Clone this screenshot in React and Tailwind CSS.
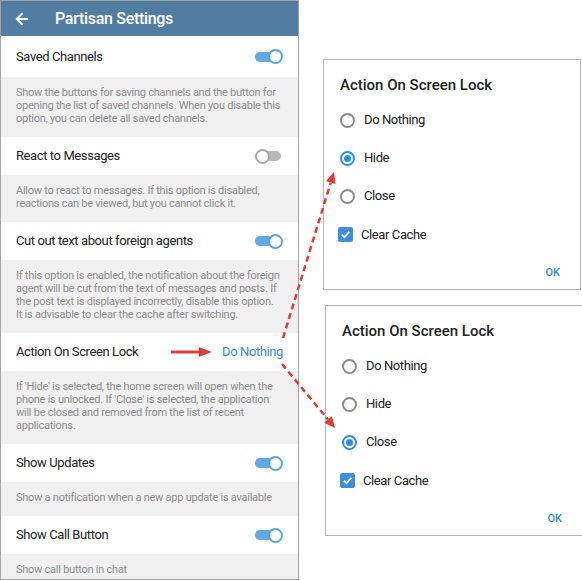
import { ArrowLeft } from 'lucide-react'

const ROWS = [
  {
    title: 'Saved Channels',
    toggle: true,
    first: true,
    desc: [
      'Show the buttons for saving channels and the button for',
      'opening the list of saved channels. When you disable this',
      'option, you can delete all saved channels.',
    ],
  },
  {
    title: 'React to Messages',
    toggle: false,
    desc: [
      'Allow to react to messages. If this option is disabled,',
      'reactions can be viewed, but you cannot click it.',
    ],
  },
  {
    title: 'Cut out text about foreign agents',
    toggle: true,
    desc: [
      'If this option is enabled, the notification about the foreign',
      'agent will be cut from the text of messages and posts. If',
      'the post text is displayed incorrectly, disable this option.',
      'It is advisable to clear the cache after switching.',
    ],
  },
  {
    title: 'Action On Screen Lock',
    value: 'Do Nothing',
    desc: [
      "If 'Hide' is selected, the home screen will open when the",
      "phone is unlocked. If 'Close' is selected, the application",
      'will be closed and removed from the list of recent',
      'applications.',
    ],
  },
  {
    title: 'Show Updates',
    toggle: true,
    desc: ['Show a notification when a new app update is available'],
  },
  {
    title: 'Show Call Button',
    toggle: true,
    desc: ['Show call button in chat'],
  },
]

function Toggle({ on }) {
  return (
    <div className="relative w-[28px] h-[15px]">
      {on ? (
        <>
          <div className="absolute left-0 right-[3px] top-[2.5px] h-[10px] rounded-full bg-[#63a9e6]" />
          <div className="absolute right-0 top-0 w-[15px] h-[15px] rounded-full bg-white border-2 border-[#5ba4e4]" />
        </>
      ) : (
        <>
          <div className="absolute left-[3px] right-[2px] top-[2.5px] h-[10px] rounded-full bg-[#b9b9b9]" />
          <div className="absolute left-0 top-0 w-[15px] h-[15px] rounded-full bg-white border-2 border-[#a9a9a9]" />
        </>
      )}
    </div>
  )
}

function Radio({ checked, label }) {
  return (
    <div className="h-[38px] flex items-center gap-[9px]">
      {checked ? (
        <div className="w-[15px] h-[15px] rounded-full border-2 border-[#2b8fe8] flex items-center justify-center">
          <div className="w-[7px] h-[7px] rounded-full bg-[#2b8fe8]" />
        </div>
      ) : (
        <div className="w-[15px] h-[15px] rounded-full border-2 border-[#8a8a8a]" />
      )}
      <span className="text-[13px] tracking-[-0.4px] text-[#222]">{label}</span>
    </div>
  )
}

function Dialog({ selected }) {
  return (
    <div className="w-[258px] h-[231px] bg-white border border-[#b5b5b5] pl-[16px] pr-[20px] pt-[15px] flex flex-col">
      <div className="text-[15px] leading-[20px] font-medium text-[#222]">Action On Screen Lock</div>
      <div className="mt-[6px] flex flex-col">
        {['Do Nothing', 'Hide', 'Close'].map((o) => (
          <Radio key={o} label={o} checked={o === selected} />
        ))}
        <div className="h-[39px] flex items-center gap-[8px] -ml-[2px]">
          <div className="w-[15px] h-[15px] rounded-[2px] bg-[#3d8fdc] flex items-center justify-center">
            <svg viewBox="0 0 12 12" className="w-[11px] h-[11px]" fill="none" stroke="white" strokeWidth="2">
              <path d="M2 6.2 L4.8 9 L10 3.2" />
            </svg>
          </div>
          <span className="text-[13px] tracking-[-0.4px] text-[#222]">Clear Cache</span>
        </div>
      </div>
      <div className="mt-[11px] flex justify-end">
        <span className="text-[11px] font-medium text-[#3a8ad4]">OK</span>
      </div>
    </div>
  )
}

function SettingsPhone() {
  return (
    <div className="w-[299px] h-[580px] border border-[#a3a3a3] bg-[#f0f0f0] overflow-hidden flex flex-col shrink-0">
      <div className="h-[35px] shrink-0 bg-[#527da3] flex items-center pl-[12px] gap-[24px] text-white">
        <ArrowLeft size={18} strokeWidth={2.5} />
        <span className="text-[16px] font-medium tracking-[-0.3px]">Partisan Settings</span>
      </div>
      {ROWS.map((r) => (
        <div key={r.title}>
          <div
            className={`${r.first ? 'h-[41px]' : 'h-[38px]'} bg-white flex items-center justify-between pl-[15px] pr-[15px]`}
          >
            <span className="text-[13px] tracking-[-0.4px] text-[#222]">{r.title}</span>
            {r.value ? (
              <div className="flex items-center gap-[9px]">
                <svg width="42" height="12" viewBox="0 0 42 12">
                  <path d="M0 6 H30" stroke="#e23b36" strokeWidth="3" />
                  <path d="M28 1 L41 6 L28 11 Z" fill="#e23b36" />
                </svg>
                <span className="text-[13px] tracking-[-0.4px] text-[#3a8ad4]">{r.value}</span>
              </div>
            ) : (
              <Toggle on={r.toggle} />
            )}
          </div>
          <div className="pt-[9px] pb-[12px] pl-[15px] pr-[8px] text-[11px] leading-[13px] tracking-[-0.25px] text-[#8d8d8d]">
            {r.desc.map((l) => (
              <div key={l} className="whitespace-nowrap">{l}</div>
            ))}
          </div>
        </div>
      ))}
    </div>
  )
}

export default function App() {
  return (
    <div
      className="relative w-[582px] h-[580px] bg-white flex"
      style={{ fontFamily: 'Roboto, "Noto Sans", sans-serif' }}
    >
      <SettingsPhone />
      <div className="flex flex-col pt-[59px] pl-[24px]">
        <Dialog selected="Hide" />
        <div className="mt-[15px] ml-[2px]">
          <Dialog selected="Close" />
        </div>
      </div>
      <svg className="absolute inset-0 pointer-events-none" width="582" height="580" viewBox="0 0 582 580">
        <path d="M283 338 L330.8 182.5" stroke="#e23b36" strokeWidth="2.5" strokeDasharray="6 4" fill="none" />
        <path d="M334 172 L335.6 184 L326 181 Z" fill="#e23b36" />
        <path d="M282 364 L328 419.5" stroke="#e23b36" strokeWidth="2.5" strokeDasharray="6 4" fill="none" />
        <path d="M335 428 L331.9 416.3 L324.2 422.7 Z" fill="#e23b36" />
      </svg>
    </div>
  )
}
